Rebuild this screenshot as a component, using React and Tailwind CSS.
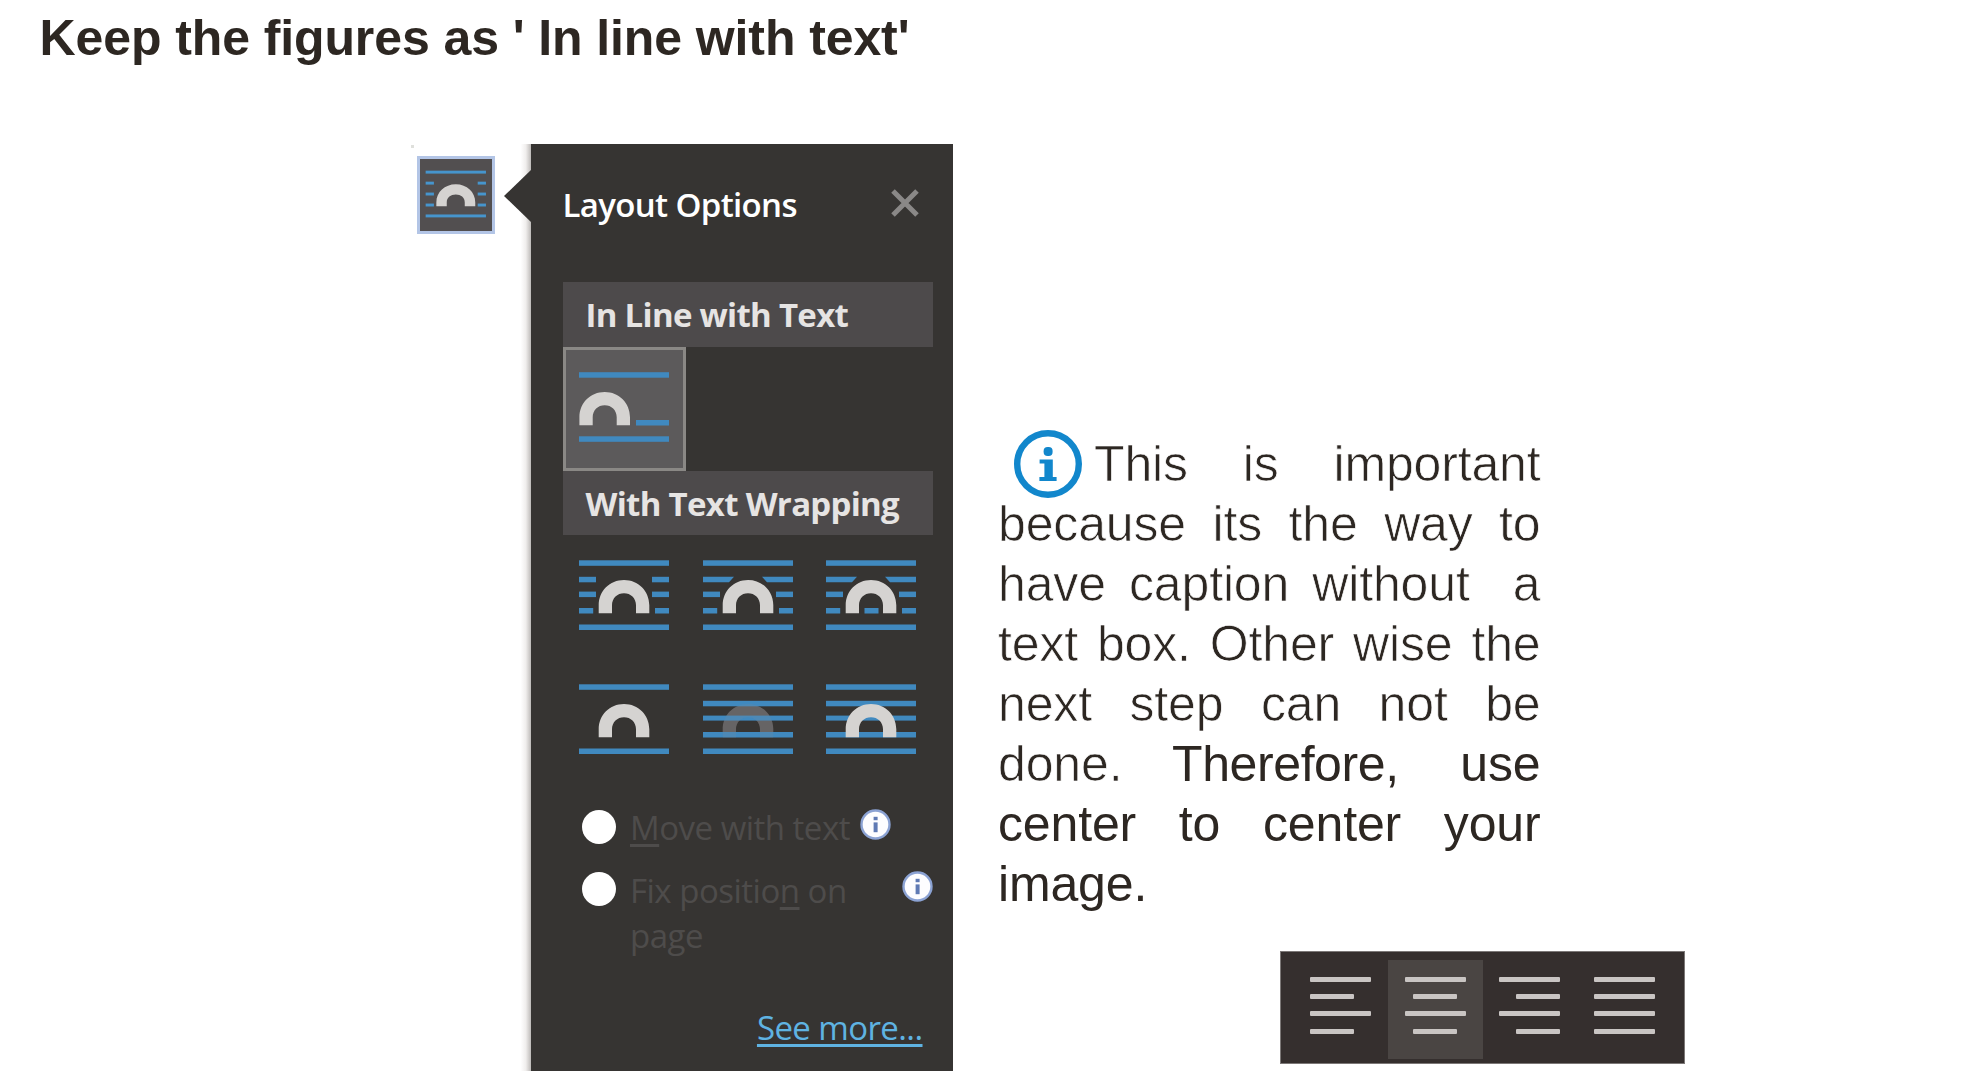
const BLUE = "#4089bf";
const LIGHT = "#d5d3d1";

function Arch({ x = 19.7, y = 20, fill = LIGHT }) {
  return (
    <path
      transform={`translate(${x} ${y})`}
      fill={fill}
      d="M0 33.3V25.3C0 11 11 0 25.3 0S50.6 11 50.6 25.3V33.3H37.3V25.3C37.3 18 32 13.2 25.3 13.2S13.3 18 13.3 25.3V33.3Z"
    />
  );
}

function Line({ x = 0, y, w = 90, h = 5.5 }) {
  return <rect x={x} y={y} width={w} height={h} fill={BLUE} />;
}

const Y = [0.3, 16.8, 31.6, 48, 64.5];

function WrapIcon({ kind }) {
  const sideGap = kind === "square" || kind === "tight" || kind === "through";
  const full = kind === "behind" || kind === "front";
  return (
    <svg className="h-[70px] w-[90px]" viewBox="0 0 90 70">
      <Line y={Y[0]} />
      <Line y={Y[4]} />
      {sideGap && (
        <>
          {kind === "square" ? (
            <>
              <Line y={Y[1]} w={17} />
              <Line x={73} y={Y[1]} w={17} />
            </>
          ) : (
            <path fill={BLUE} d="M0 16.8H31L26 22.3H0ZM59 16.8H90V22.3H64Z" />
          )}
          <Line y={Y[2]} w={17} />
          <Line x={73} y={Y[2]} w={17} />
          <Line y={Y[3]} w={14.2} />
          <Line x={76} y={Y[3]} w={14} />
          {kind === "through" && <Line x={38.5} y={Y[3]} w={14} />}
        </>
      )}
      {kind === "behind" && <Arch fill="#5f5c5c" />}
      {full && (
        <>
          <Line y={Y[1]} />
          <Line y={Y[2]} h={5} />
          <Line y={Y[3]} />
        </>
      )}
      {kind === "behind" ? (
        <path
          transform="translate(19.7 20)"
          fill="#8a8a8e"
          opacity="0.18"
          d="M0 33.3V25.3C0 11 11 0 25.3 0S50.6 11 50.6 25.3V33.3H37.3V25.3C37.3 18 32 13.2 25.3 13.2S13.3 18 13.3 25.3V33.3Z"
        />
      ) : (
        <Arch />
      )}
    </svg>
  );
}

function InlineIcon() {
  return (
    <svg className="h-[70px] w-[90px]" viewBox="0 0 90 70">
      <Line y={0.2} />
      <Line x={57} y={48} w={33} />
      <Line y={64.3} />
      <Arch x={0.4} />
    </svg>
  );
}

function LayoutThumb() {
  return (
    <div className="mt-3 h-[78px] w-[78px] shrink-0 border-[3px] border-[#b3c5e6] bg-[#524f50]">
      <svg className="h-full w-full" viewBox="0 0 74 74">
        <g fill="#4695cd">
          <rect x="5.8" y="12" width="62" height="3" />
          <rect x="5.8" y="23.3" width="8.5" height="3" />
          <rect x="59.3" y="23.3" width="8.5" height="3" />
          <rect x="5.8" y="34.5" width="8.5" height="3" />
          <rect x="59.3" y="34.5" width="8.5" height="3" />
          <rect x="5.8" y="45.8" width="8.5" height="3" />
          <rect x="59.3" y="45.8" width="8.5" height="3" />
          <rect x="5.8" y="57" width="62" height="3" />
        </g>
        <path
          fill={LIGHT}
          d="M16.8 48.6V44.6C16.8 34 25.4 26 36.8 26S56.8 34 56.8 44.6V48.6H46V44.6C46 39.5 42 36.5 36.8 36.5S27.5 39.5 27.5 44.6V48.6Z"
        />
      </svg>
    </div>
  );
}

function SectionBar({ children }) {
  return (
    <div className="h-[64.5px] w-[370.5px] bg-[#4d4a4b] pl-[23px] font-bold leading-[65.5px] tracking-[-0.7px] text-[#e6e4e3]">
      {children}
    </div>
  );
}

function SmallInfo() {
  return (
    <svg className="h-[31px] w-[31px] shrink-0" viewBox="0 0 31 31">
      <circle cx="15.5" cy="15.5" r="14" fill="#fdfdff" stroke="#8ba2d3" strokeWidth="2.4" />
      <rect x="13.6" y="7.8" width="4" height="3.4" fill="#5f7ab4" />
      <rect x="13.6" y="13.4" width="4" height="9.8" fill="#5f7ab4" />
    </svg>
  );
}

function Radio() {
  return <span className="mt-[3.5px] h-[34px] w-[34px] shrink-0 rounded-full bg-white" />;
}

function Key({ children }) {
  return (
    <span className="underline decoration-[2.5px] underline-offset-[4px] [text-decoration-skip-ink:none]">{children}</span>
  );
}

function LayoutPanel() {
  return (
    <div className="h-[927px] w-[422px] shrink-0 bg-[#363432] pl-[31.5px] font-['Open_Sans',sans-serif] text-[33px] leading-[44px]">
      <div className="flex h-[138px] items-start pt-[39px]">
        <h2 className="w-[328px] font-semibold tracking-[-0.65px] text-white">Layout Options</h2>
        <svg className="mt-[6px] h-7 w-7" viewBox="0 0 28 28" stroke="#8a8887" strokeWidth="5">
          <path d="M2 2L26 26M26 2L2 26" />
        </svg>
      </div>
      <SectionBar>In Line with Text</SectionBar>
      <div className="h-[124px] w-[123.5px] border-[3px] border-[#8a8885] bg-[#5c5a5b] pl-[13.5px] pt-[22.5px]">
        <InlineIcon />
      </div>
      <SectionBar>With Text Wrapping</SectionBar>
      <div className="grid h-[271px] grid-cols-[repeat(3,123.6px)] grid-rows-[repeat(2,123.5px)] pl-[16.5px] pt-[25px]">
        {["square", "tight", "through", "topBottom", "behind", "front"].map((kind) => (
          <WrapIcon key={kind} kind={kind} />
        ))}
      </div>
      <div className="flex h-[62px] pl-[19.5px] text-[#4e4c4b]">
        <Radio />
        <span className="ml-[14px] w-[230px] whitespace-nowrap tracking-[-0.5px]">
          <Key>M</Key>ove with text
        </span>
        <span className="mt-[3px] h-[31px]"><SmallInfo /></span>
      </div>
      <div className="flex h-[137px] pl-[19.5px] text-[#4e4c4b]">
        <Radio />
        <span className="ml-[14px] w-[272px] whitespace-nowrap leading-[45px] tracking-[-0.5px]">
          Fix positio<Key>n</Key> on
          <br />
          page
        </span>
        <span className="mt-[3px] h-[31px]"><SmallInfo /></span>
      </div>
      <div className="pr-[30.5px] pt-px text-right tracking-[-0.6px] text-[#5fb3e2]">
        <a className="underline decoration-[2.5px] underline-offset-[4px] [text-decoration-skip-ink:none]">See more...</a>
      </div>
    </div>
  );
}

function ImportantIcon() {
  return (
    <svg className="ml-4 h-[68px] w-[68px] shrink-0" viewBox="0 0 68 68" fill="#1287cc">
      <circle cx="34" cy="34" r="30.8" fill="none" stroke="#1287cc" strokeWidth="6.4" />
      <rect x="29.6" y="17" width="9" height="9" rx="4" />
      <path d="M25.6 29.5H38.8V47H42.6V51H25.4V47H30.4V33.5H25.6Z" />
    </svg>
  );
}

function TextLine({ children, bold }) {
  return (
    <div
      className={
        bold
          ? "flex h-[60px] justify-between"
          : "flex h-[60px] justify-between [-webkit-text-stroke:0.7px_white]"
      }
    >
      {children}
    </div>
  );
}

function words(text) {
  return text.split(" ").map((w, i) => <span key={i}>{w}</span>);
}

function Note() {
  return (
    <div className="w-[542.5px] whitespace-nowrap text-[50px] leading-[60px] tracking-[-0.15px]">
      <div className="flex h-[60px] items-center">
        <ImportantIcon />
        <div className="ml-[12px] grow">
          <TextLine>{words("This is important")}</TextLine>
        </div>
      </div>
      <TextLine>{words("because its the way to")}</TextLine>
      <TextLine>{words("have caption without")}<span className="ml-5">a</span></TextLine>
      <TextLine>{words("text box. Other wise the")}</TextLine>
      <TextLine>{words("next step can not be")}</TextLine>
      <TextLine bold>
        <span className="[-webkit-text-stroke:0.7px_white]">done.</span>
        <span className="tracking-[-0.4px]">Therefore,</span>
        <span className="ml-[12px]">use</span>
      </TextLine>
      <TextLine bold>{words("center to center your")}</TextLine>
      <TextLine bold>{words("image.")}</TextLine>
    </div>
  );
}

const ROW = "h-[5px] rounded-[1px] bg-[#c9c5c3]";

function AlignIcon({ align, short = "w-[44px]" }) {
  return (
    <div className={`flex w-[61px] flex-col gap-[12.2px] ${align}`}>
      <div className={`${ROW} w-[61px]`} />
      <div className={`${ROW} ${short}`} />
      <div className={`${ROW} w-[61px]`} />
      <div className={`${ROW} ${short}`} />
    </div>
  );
}

function AlignToolbar() {
  return (
    <div className="flex h-[113px] w-[405px] border border-[#7c7877] bg-[#352f2e] pl-[12.5px] pt-[8px]">
      <div className="w-[94.5px] pl-[16.5px] pt-[17px]"><AlignIcon align="items-start" /></div>
      <div className="h-[99px] w-[94.5px] bg-[#4a4543] pl-[16.5px] pt-[17px]"><AlignIcon align="items-center" /></div>
      <div className="w-[94.5px] pl-[16.5px] pt-[17px]"><AlignIcon align="items-end" /></div>
      <div className="w-[94.5px] pl-[16.5px] pt-[17px]"><AlignIcon align="items-start" short="w-[61px]" /></div>
    </div>
  );
}

export default function App() {
  return (
    <main className="h-[1090px] w-[1969px] overflow-hidden bg-white pt-[8px] font-['Liberation_Sans',Arial,sans-serif] text-[#2d2722]">
      <h1 className="ml-[39.5px] text-[50px] font-bold leading-[60px] tracking-[-0.1px]">Keep the figures as ' In line with text'</h1>
      <div className="mt-[76px] flex items-start">
        <div className="ml-[411px] mt-px h-[3px] w-[3px] bg-[#dfe0dc]" />
        <div className="ml-[3px]"><LayoutThumb /></div>
        <div className="ml-[10px] flex h-[927px] w-[26px] justify-end bg-[linear-gradient(to_right,white_60%,#f0eeed_80%,#bdbab8)]">
          <svg className="mt-[26px] h-[52px] w-[27px] shrink-0" viewBox="0 0 27 52" fill="#363432">
            <path d="M0 26L27 0V52Z" />
          </svg>
        </div>
        <LayoutPanel />
        <div className="ml-[45px] mt-[289.5px]">
          <Note />
          <div className="ml-[282px] mt-[37.5px]"><AlignToolbar /></div>
        </div>
      </div>
    </main>
  );
}
